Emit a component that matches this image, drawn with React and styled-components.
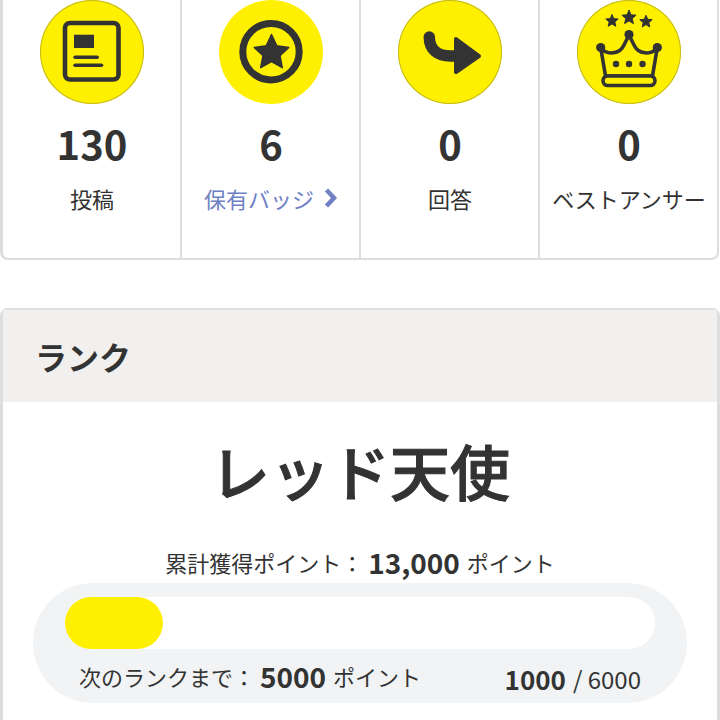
import React from 'react'
import styled, { createGlobalStyle } from 'styled-components'

const GlobalStyle = createGlobalStyle`
  html, body {
    margin: 0;
    padding: 0;
    background: #fff;
    overflow: hidden;
  }
  body {
    font-family: "Noto Sans CJK JP", "Noto Sans", sans-serif;
    color: #333;
  }
`

const Page = styled.div`
  width: 720px;
  height: 720px;
  overflow: hidden;
`

const StatsCard = styled.div`
  display: grid;
  grid-template-columns: 179px 179px 179px 1fr;
  width: 719px;
  height: 260px;
  box-sizing: border-box;
  border: 2px solid #dcdddd;
  border-left-width: 3px;
  border-top: none;
  border-radius: 0 0 8px 8px;
`

const StatCell = styled.div`
  display: flex;
  flex-direction: column;
  align-items: center;
  box-sizing: border-box;
  padding-left: 1px;
  border-right: ${p => (p.$last ? 'none' : '2px solid #dcdddd')};
`

const Circle = styled.div`
  width: 104px;
  height: 104px;
  border-radius: 50%;
  background: #fff000;
  box-shadow: ${p => (p.$plain ? 'none' : 'inset 0 0 0 1px #c4ba20')};
  display: flex;
  align-items: center;
  justify-content: center;
  flex-shrink: 0;
`

const StatNumber = styled.div`
  margin-top: 14px;
  font-size: 40px;
  line-height: 50px;
  font-weight: 700;
  color: #333;
`

const StatLabel = styled.div`
  margin-top: 15px;
  font-size: 22px;
  line-height: 30px;
  white-space: nowrap;
  color: ${p => (p.$link ? '#6f80c4' : '#333')};
  display: flex;
  align-items: center;
  gap: 10px;
`

const RankCard = styled.section`
  margin-top: 48px;
  border: 2px solid #dcdddd;
  border-left-width: 3px;
  border-right-width: 3px;
  border-bottom: none;
  border-radius: 8px 8px 0 0;
  height: 412px;
  box-sizing: border-box;
`

const RankHeader = styled.h2`
  margin: 0;
  height: 92px;
  box-sizing: border-box;
  padding-left: 32px;
  background: #f1f0ef;
  display: flex;
  align-items: center;
  font-size: 32px;
  font-weight: 700;
  color: #333;
`

const RankName = styled.div`
  margin-top: 28px;
  text-align: center;
  font-size: 60px;
  line-height: 80px;
  font-weight: 500;
  -webkit-text-stroke: 1px #333;
  color: #333;
`

const TotalLine = styled.div`
  margin-top: 32px;
  height: 40px;
  display: flex;
  align-items: center;
  justify-content: center;
  font-size: 22px;
  white-space: nowrap;
`

const Strong = styled.strong`
  font-size: ${p => p.$size || 28}px;
  font-weight: 700;
  margin: 0 ${p => p.$gap ?? 7}px 0 ${p => p.$left ?? 5}px;
`

const ProgressBox = styled.div`
  margin: 1px 30px 0;
  height: 120px;
  box-sizing: border-box;
  padding: 14px 32px 0;
  background: #f1f3f5;
  border-radius: 60px;
`

const Track = styled.div`
  height: 52px;
  background: #fff;
  border-radius: 26px;
`

const Fill = styled.div`
  height: 100%;
  background: #fff000;
  border-radius: 26px;
`

const ProgressFoot = styled.div`
  display: flex;
  justify-content: space-between;
  align-items: center;
  height: 54px;
  padding: 0 14px;
  font-size: 22px;
  white-space: nowrap;
`

const FootSide = styled.div`
  display: flex;
  align-items: center;
`

const Ratio = styled.div`
  display: flex;
  align-items: center;
  font-size: 24px;
  margin-top: 4px;
`

const PostIcon = () => (
  <svg width="104" height="104" viewBox="0 0 104 104" fill="none">
    <rect x="25" y="23" width="53.500" height="56.500" rx="5" stroke="#333" strokeWidth="4.600" />
    <rect x="34" y="34.700" width="20" height="13.300" fill="#333" />
    <rect x="33.300" y="55.500" width="25.700" height="3.600" rx="1.800" fill="#333" />
    <rect x="33.300" y="63.500" width="30" height="3.600" rx="1.800" fill="#333" />
  </svg>
)

const BadgeIcon = () => (
  <svg width="104" height="104" viewBox="0 0 104 104" fill="none">
    <circle cx="52" cy="51.700" r="28.200" stroke="#333" strokeWidth="7" />
    <path
      d="M52.500 34.500l5.300 11.200 12 1.700-8.800 8.300 2.300 12-10.800-6-10.800 6 2.300-12-8.800-8.300 12-1.700z"
      fill="#333" stroke="#333" strokeWidth="1.500" strokeLinejoin="round"
    />
  </svg>
)

const AnswerIcon = () => (
  <svg width="104" height="104" viewBox="0 0 104 104" fill="none">
    <path d="M31.300 37c0 13 9 19 21 19h8" stroke="#333" strokeWidth="11.500" strokeLinecap="round" />
    <path d="M58 39L81 56 58 72z" fill="#333" stroke="#333" strokeWidth="4" strokeLinejoin="round" />
  </svg>
)

const starPoints = (cx, cy, r) => {
  const pts = []
  for (let i = 0; i < 10; i++) {
    const rad = i % 2 === 0 ? r : r * 0.45
    const a = -Math.PI / 2 + (i * Math.PI) / 5
    pts.push(`${(cx + rad * Math.cos(a)).toFixed(1)},${(cy + rad * Math.sin(a)).toFixed(1)}`)
  }
  return pts.join(' ')
}

const CrownIcon = () => (
  <svg width="104" height="104" viewBox="0 0 104 104" fill="none">
    <polygon points={starPoints(35, 21, 6.5)} fill="#333" stroke="#333" strokeWidth="1" strokeLinejoin="round" />
    <polygon points={starPoints(52, 17.5, 7.5)} fill="#333" stroke="#333" strokeWidth="1" strokeLinejoin="round" />
    <polygon points={starPoints(69, 21.7, 6.5)} fill="#333" stroke="#333" strokeWidth="1" strokeLinejoin="round" />
    <circle cx="52" cy="34.500" r="4.600" fill="#333" />
    <circle cx="23.700" cy="47.500" r="4.600" fill="#333" />
    <circle cx="80.300" cy="47.500" r="4.600" fill="#333" />
    <path
      d="M23.700 47.500C30 56 43 54 47 45c2-4 4-8 5-10 1 2 3 6 5 10 4 9 17 11 23.300 2.500L75.500 76H28.500z"
      stroke="#333" strokeWidth="3.600" strokeLinejoin="round"
    />
    <rect x="26" y="76" width="52" height="9.500" rx="4.700" stroke="#333" strokeWidth="3.600" fill="#fff000" />
    <circle cx="39" cy="64" r="3.200" fill="#333" />
    <circle cx="52" cy="64" r="3.200" fill="#333" />
    <circle cx="65.500" cy="64" r="3.200" fill="#333" />
  </svg>
)

const Chevron = () => (
  <svg width="14" height="20" viewBox="0 0 14 20" fill="none">
    <path d="M2.500 2l7.500 8-7.500 8" stroke="#6f80c4" strokeWidth="4.500" />
  </svg>
)

const stats = [
  { icon: <PostIcon />, value: '130', label: '投稿' },
  { icon: <BadgeIcon />, value: '6', label: '保有バッジ', link: true, plain: true },
  { icon: <AnswerIcon />, value: '0', label: '回答' },
  { icon: <CrownIcon />, value: '0', label: 'ベストアンサー' },
]

const progress = 98 / 590

export default function App() {
  return (
    <Page>
      <GlobalStyle />
      <StatsCard>
        {stats.map((s, i) => (
          <StatCell key={s.label} $last={i === stats.length - 1}>
            <Circle $plain={s.plain}>{s.icon}</Circle>
            <StatNumber>{s.value}</StatNumber>
            <StatLabel $link={s.link}>
              {s.label}
              {s.link && <Chevron />}
            </StatLabel>
          </StatCell>
        ))}
      </StatsCard>
      <RankCard>
        <RankHeader>ランク</RankHeader>
        <RankName>レッド天使</RankName>
        <TotalLine>
          累計獲得ポイント：<Strong>13,000</Strong>ポイント
        </TotalLine>
        <ProgressBox>
          <Track>
            <Fill style={{ width: `${progress * 100}%` }} />
          </Track>
          <ProgressFoot>
            <FootSide>
              次のランクまで：<Strong>5000</Strong>ポイント
            </FootSide>
            <Ratio>
              <Strong $size={26} $left={0} $gap={7}>1000</Strong>/&nbsp;6000
            </Ratio>
          </ProgressFoot>
        </ProgressBox>
      </RankCard>
    </Page>
  )
}
